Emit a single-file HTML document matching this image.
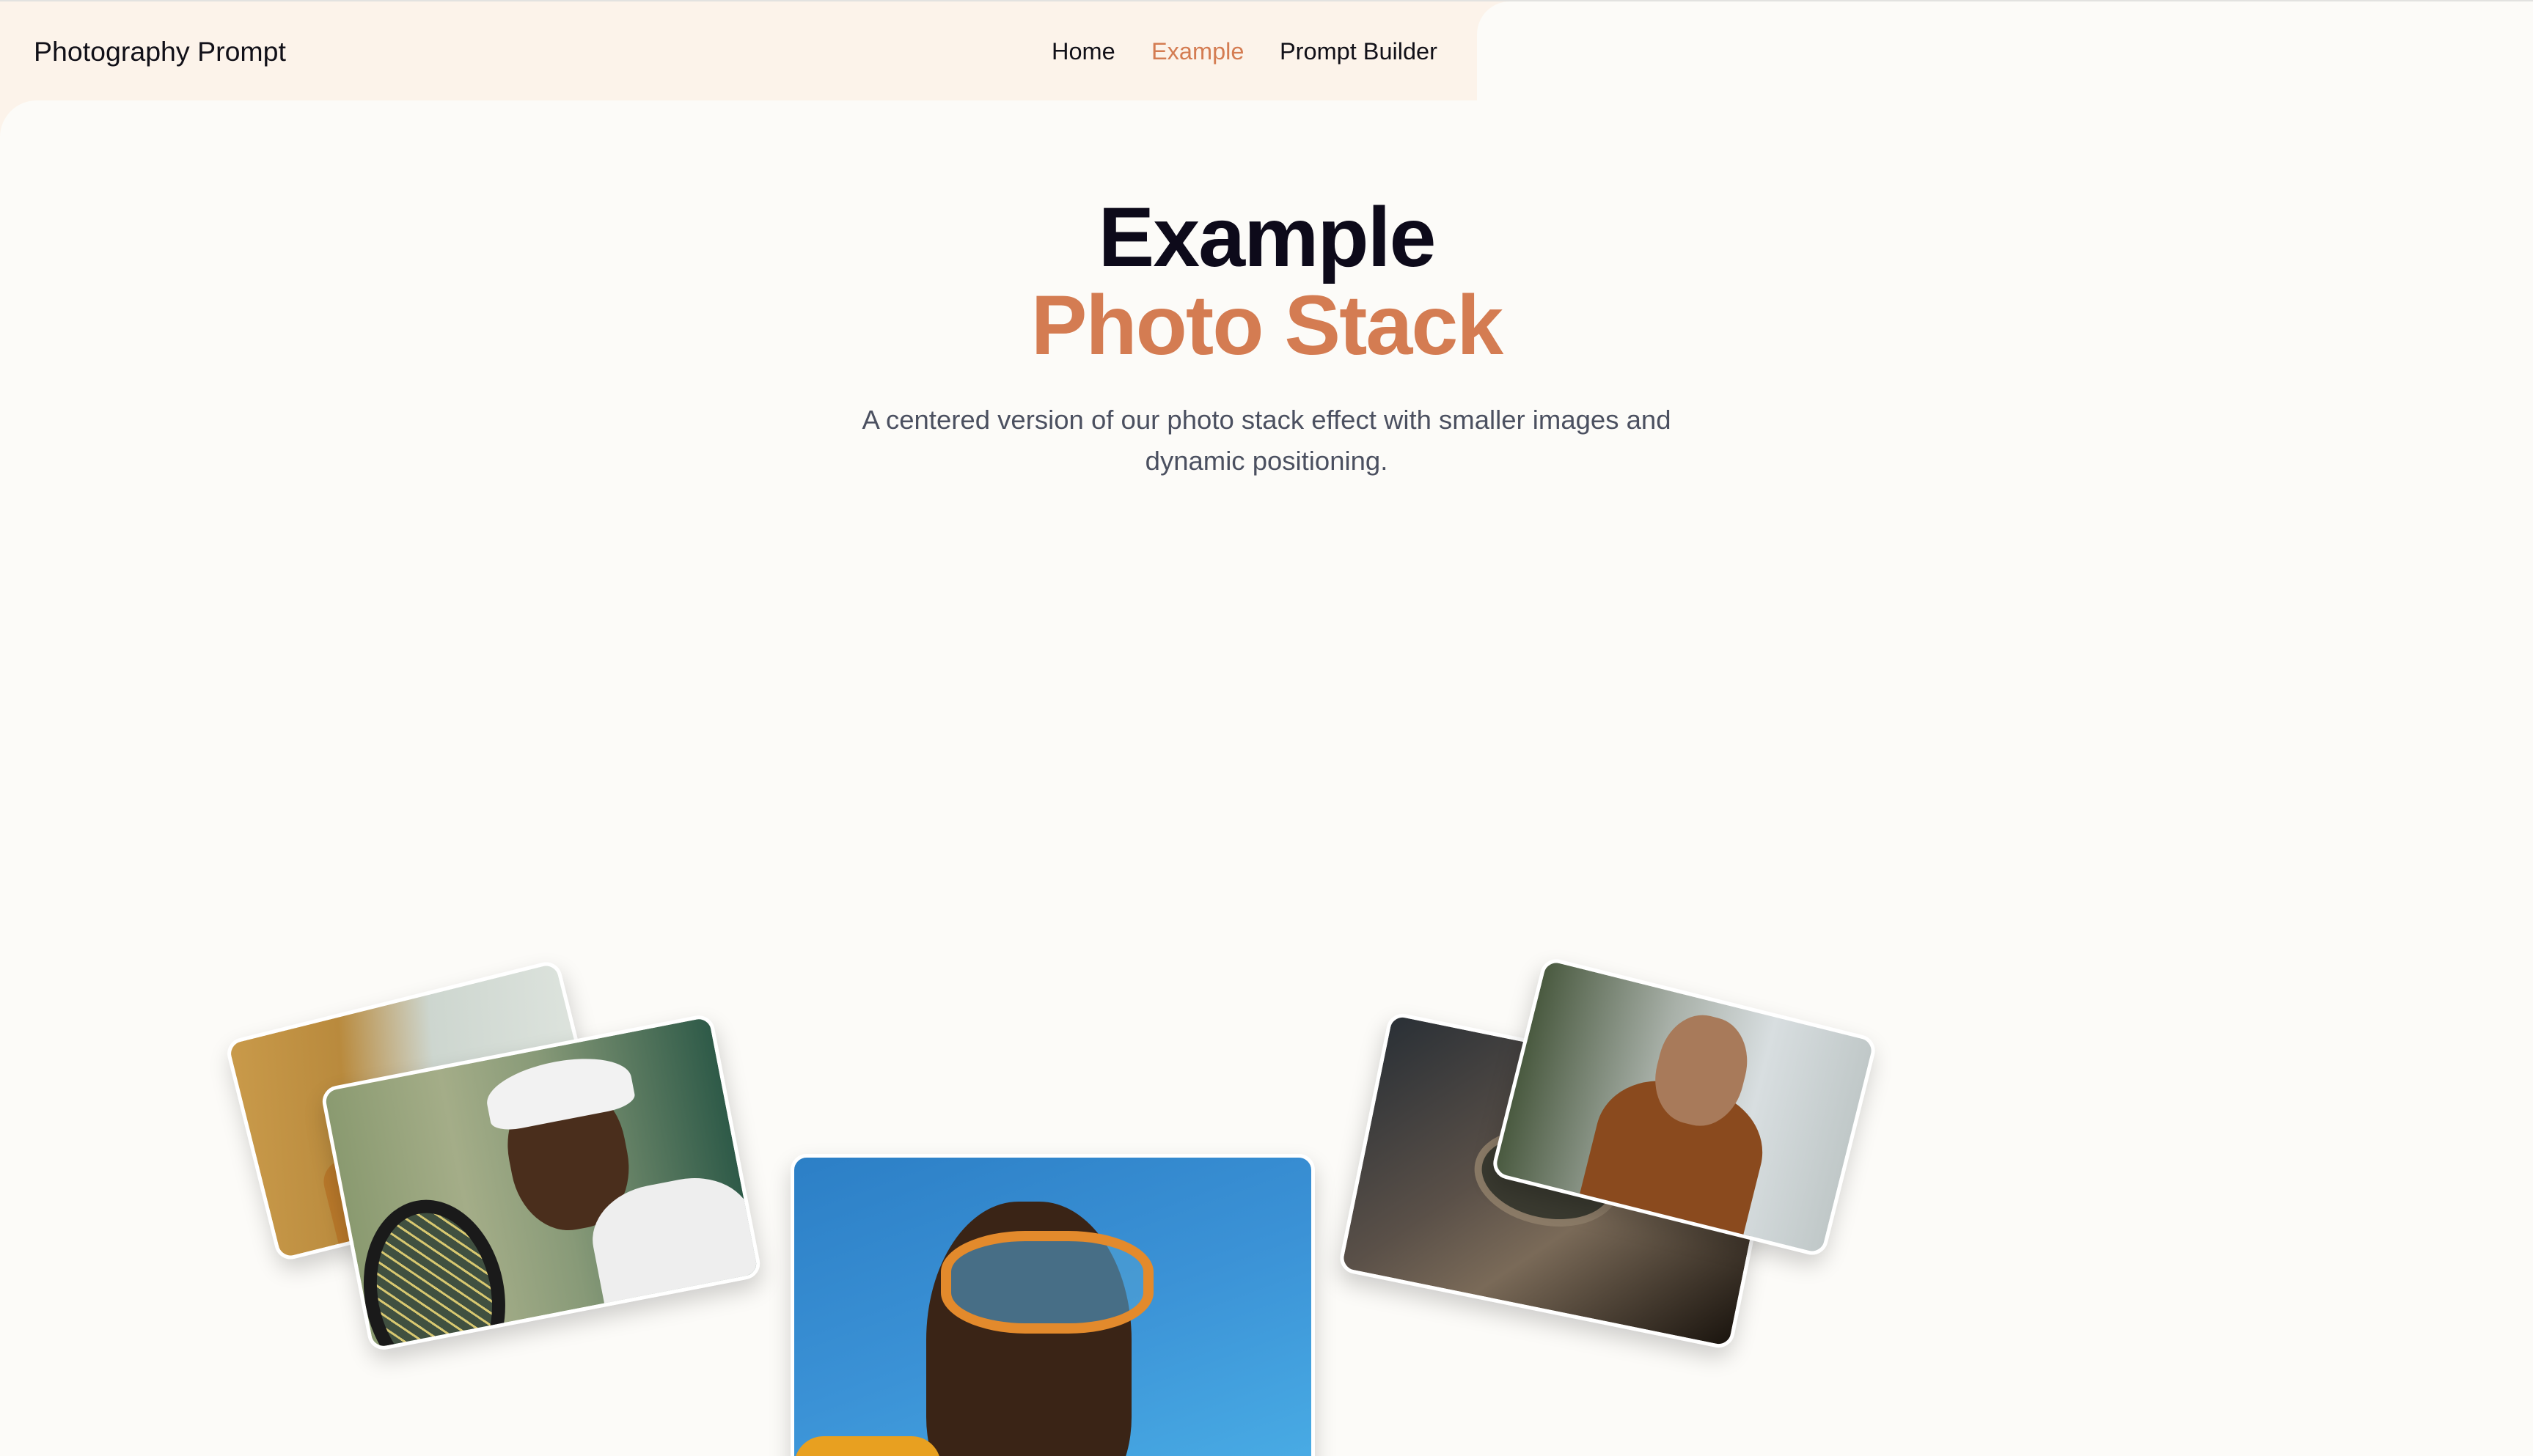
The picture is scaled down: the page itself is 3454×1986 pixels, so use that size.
<!DOCTYPE html>
<html><head><meta charset="utf-8"><style>
*{margin:0;padding:0;box-sizing:border-box}
html{width:3454px;height:1986px;overflow:hidden}
body{width:3454px;height:1986px;overflow:hidden;background:#fcf3ea;font-family:"Liberation Sans",sans-serif;position:relative}
.topline{position:absolute;left:0;top:0;width:100%;height:2px;background:#e2e2e0;z-index:5}
.main{position:absolute;left:0;top:137px;width:100%;height:1849px;background:#fcfbf8;border-top-left-radius:50px}
.rightfill{position:absolute;left:2014px;top:2px;right:0;height:200px;background:#fcfbf8;border-top-left-radius:45px}
.header{position:absolute;left:0;top:2px;width:2014px;height:135px;background:#fcf3ea;border-bottom-right-radius:60px;z-index:2}
.logo{position:absolute;left:46px;top:47px;font-size:37.5px;color:#111018}
.nav{position:absolute;top:50px;font-size:32.5px;color:#111018}
.h1{position:absolute;left:0;width:3454px;text-align:center;font-weight:bold;font-size:115px;letter-spacing:-2px;line-height:120px}
.sub{position:absolute;left:1147px;width:1160px;top:545px;text-align:center;font-size:36.5px;line-height:56px;color:#4b5060}
.card{position:absolute;border:5px solid #fff;border-radius:22px;overflow:hidden;box-shadow:0 14px 30px rgba(0,0,0,.18)}
.card div{position:absolute}
</style></head><body>
<div class="topline"></div>
<div class="main"></div>
<div class="rightfill"></div>
<div class="header">
<div class="logo">Photography Prompt</div>
<div class="nav" style="left:1434px">Home</div>
<div class="nav" style="left:1570px;color:#d47c52">Example</div>
<div class="nav" style="left:1745px">Prompt Builder</div>
</div>
<div class="h1" style="top:264px;color:#0d0a1a">Example</div>
<div class="h1" style="top:384px;color:#d47c52">Photo Stack</div>
<div class="sub">A centered version of our photo stack effect with smaller images and dynamic positioning.</div>

<!-- wheat -->
<div class="card" style="left:336px;top:1360px;width:469px;height:310px;transform:rotate(-14deg);background:linear-gradient(100deg,#c99a4a 0%,#b98a3d 30%,#cdd6cf 55%,#dfe5df 100%)">
<div style="left:120px;top:110px;width:80px;height:110px;border-radius:50%;background:#6a4a2a"></div>
<div style="left:80px;top:190px;width:140px;height:140px;border-radius:30px;background:#b8782a"></div>
</div>
<!-- tennis -->
<div class="card" style="left:466px;top:1430px;width:544px;height:366px;transform:rotate(-11deg);background:linear-gradient(90deg,#8a9a70 0%,#a4ad88 30%,#889a78 55%,#2e5a48 100%)">
<div style="left:0;top:170px;width:190px;height:260px;border-radius:50%;border:18px solid #1a1a1a;background:repeating-linear-gradient(45deg,#d8c870 0 3px,#405040 3px 14px)"></div>
<div style="left:230px;top:50px;width:160px;height:200px;border-radius:45%;background:#4a2e1c"></div>
<div style="left:215px;top:20px;width:200px;height:80px;border-radius:50% 50% 20% 20%;background:#f2f2f2"></div>
<div style="left:320px;top:210px;width:220px;height:170px;border-radius:40% 40% 0 0;background:#eeeeee"></div>
</div>
<!-- center -->
<div class="card" style="left:1078px;top:1574px;width:715px;height:460px;border-radius:22px;background:linear-gradient(160deg,#2c7fc6 0%,#3b92d6 50%,#4aaee6 100%)">
<div style="left:180px;top:60px;width:280px;height:420px;border-radius:45% 45% 30% 30%;background:#3a2416"></div>
<div style="left:200px;top:100px;width:290px;height:140px;border-radius:40%;border:14px solid #e38a2c;background:rgba(80,160,210,.6)"></div>
<div style="left:0;top:380px;width:200px;height:80px;background:#e8a020;border-radius:40px 40px 0 0"></div>
</div>
<!-- eye -->
<div class="card" style="left:1854px;top:1430px;width:548px;height:361px;transform:rotate(11.5deg);background:linear-gradient(135deg,#2a3036 0%,#5a5048 40%,#7a6a58 60%,#1a140e 100%)">
<div style="left:150px;top:110px;width:200px;height:130px;border-radius:50%;background:#3a3a30;border:10px solid #8a7a66"></div>
</div>
<!-- man -->
<div class="card" style="left:2062px;top:1356px;width:469px;height:308px;transform:rotate(14deg);background:linear-gradient(90deg,#4a5a40 0%,#a8b0a8 40%,#d8dee0 70%,#c0c8c8 100%)">
<div style="left:120px;top:120px;width:230px;height:200px;border-radius:40% 40% 0 0;background:#8a4a1e"></div>
<div style="left:180px;top:20px;width:120px;height:150px;border-radius:45%;background:#a87a5a"></div>
</div>
</body></html>
